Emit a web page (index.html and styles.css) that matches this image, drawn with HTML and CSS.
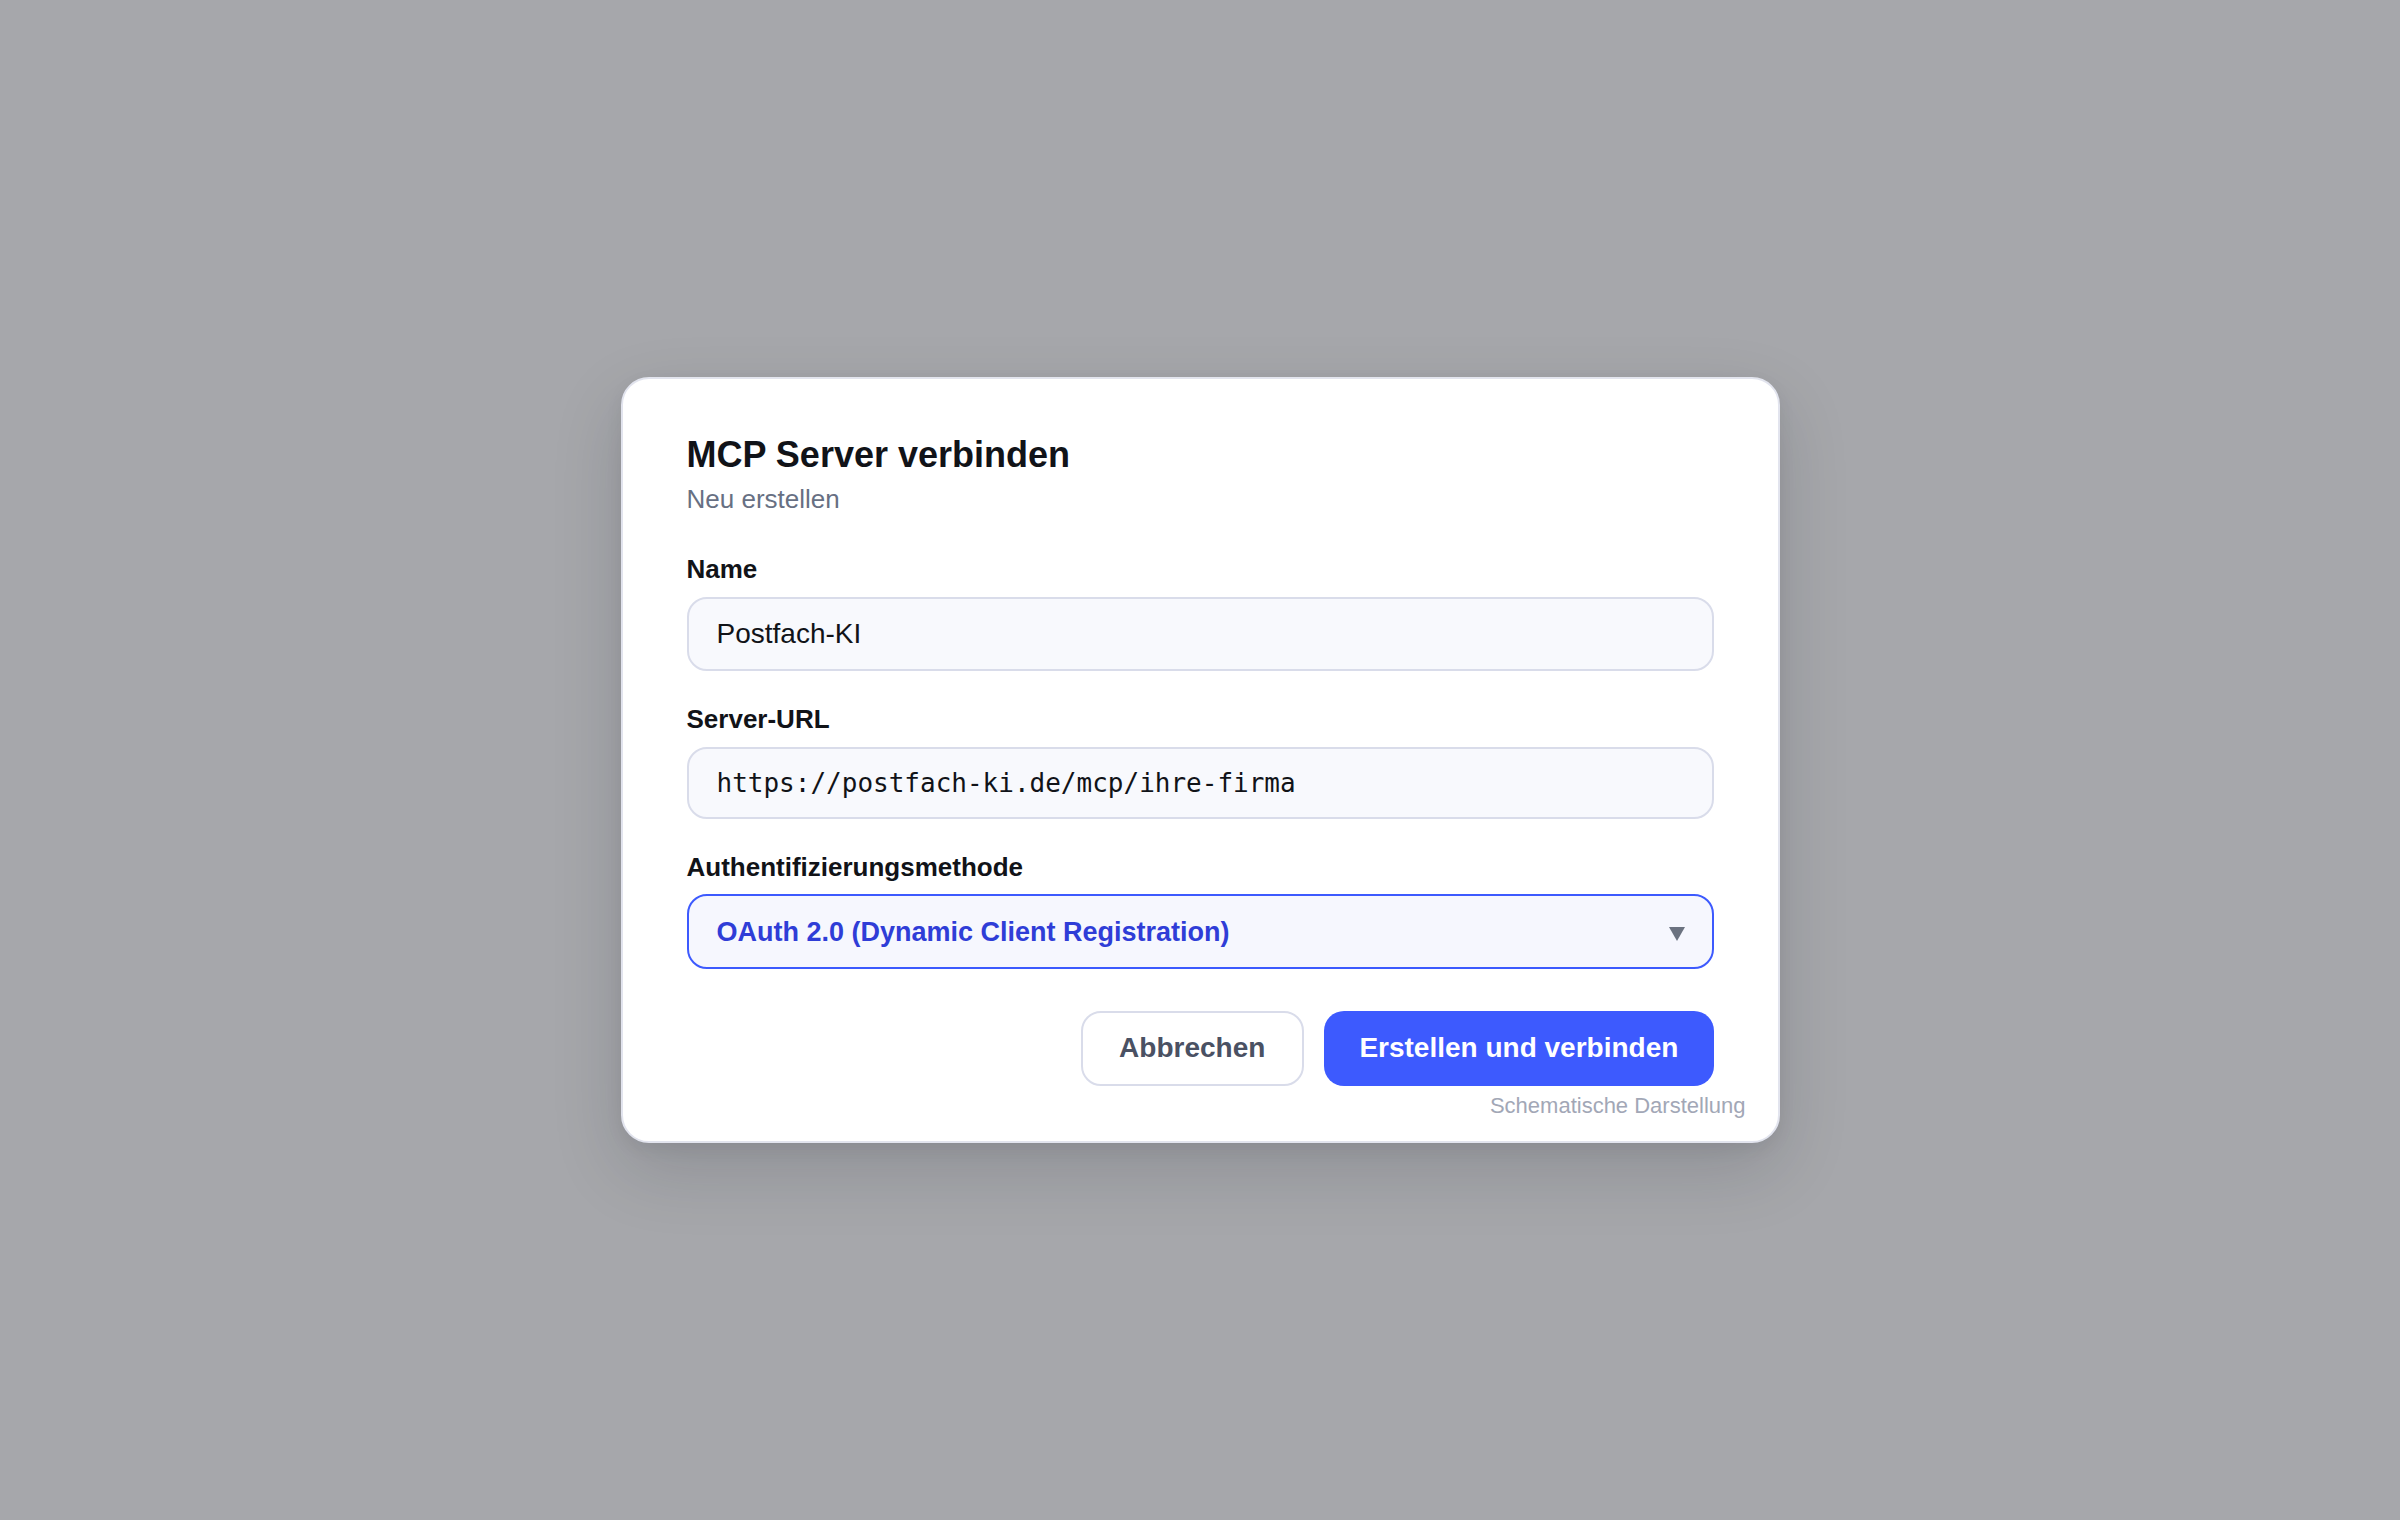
FILE: index.html
```html
<!DOCTYPE html>
<html lang="de">
<head>
<meta charset="utf-8">
<title>MCP Server verbinden</title>
<link rel="stylesheet" href="styles.css">
</head>
<body>
<div class="overlay">
  <div class="dialog">
    <div class="header">
      <h1 class="title">MCP Server verbinden</h1>
      <div class="subtitle">Neu erstellen</div>
    </div>
    <div class="fields">
      <div class="field">
        <div class="label">Name</div>
        <div class="box box-name">Postfach-KI</div>
      </div>
      <div class="field">
        <div class="label">Server-URL</div>
        <div class="box box-url">https://postfach-ki.de/mcp/ihre-firma</div>
      </div>
      <div class="field">
        <div class="label">Authentifizierungsmethode</div>
        <div class="box box-select">
          <span class="select-value">OAuth 2.0 (Dynamic Client Registration)</span>
          <svg class="caret" width="16" height="14" viewBox="0 0 16 14"><polygon points="0,0 16,0 8,14" fill="#6b7280"/></svg>
        </div>
      </div>
    </div>
    <div class="actions">
      <button class="btn btn-secondary">Abbrechen</button>
      <button class="btn btn-primary">Erstellen und verbinden</button>
    </div>
    <div class="caption">Schematische Darstellung</div>
  </div>
</div>
</body>
</html>
```
FILE: styles.css
```css
html, body {
  margin: 0;
  padding: 0;
}
body {
  background: #a6a7ab;
  font-family: "Liberation Sans", Arial, sans-serif;
  color: #111827;
}
.overlay {
  height: 1520px;
  display: flex;
  align-items: center;
  justify-content: center;
}
.dialog {
  position: relative;
  box-sizing: border-box;
  width: 1159px;
  background: #ffffff;
  border: 2px solid #e2e4ee;
  border-radius: 28px;
  padding: 54px 64px 55.5px 64px;
  box-shadow: 0 26px 70px rgba(20, 22, 35, 0.16), 0 6px 18px rgba(20, 22, 35, 0.06);
}
.header {
  display: flex;
  flex-direction: column;
  gap: 6px;
  margin-bottom: 39.3px;
}
.title {
  margin: 0;
  font-size: 36px;
  line-height: 44px;
  font-weight: 700;
  color: #111318;
}
.subtitle {
  font-size: 26px;
  line-height: 32px;
  color: #677083;
}
.fields {
  display: flex;
  flex-direction: column;
  gap: 33px;
}
.field {
  display: flex;
  flex-direction: column;
  gap: 12.6px;
}
.label {
  font-size: 26px;
  line-height: 30px;
  font-weight: 700;
  color: #111318;
}
.box {
  box-sizing: border-box;
  display: flex;
  align-items: center;
  padding: 0 28px;
  border: 2px solid #d9dcea;
  border-radius: 20px;
  background: #f8f9fd;
  color: #111318;
}
.box-name {
  height: 74.3px;
  font-size: 28px;
  padding-top: 1px;
}
.box-url {
  height: 72.3px;
  font-family: "DejaVu Sans Mono", "Liberation Mono", monospace;
  font-size: 26px;
}
.box-select {
  height: 74.7px;
  justify-content: space-between;
  border-color: #3d5afe;
  background: #f6f7fe;
  padding-top: 2px;
  padding-right: 27px;
}
.select-value {
  font-size: 27px;
  font-weight: 700;
  color: #2f3dd7;
}
.caret {
  display: block;
  margin-top: 2px;
}
.actions {
  margin-top: 41.7px;
  display: flex;
  justify-content: flex-end;
  gap: 20.7px;
}
.btn {
  box-sizing: border-box;
  height: 75px;
  border-radius: 20px;
  font-family: "Liberation Sans", Arial, sans-serif;
  font-size: 28px;
  font-weight: 700;
  cursor: pointer;
}
.btn-secondary {
  width: 222.6px;
  background: #ffffff;
  border: 2px solid #d9dcea;
  color: #4a5163;
}
.btn-primary {
  width: 389.3px;
  background: #3d5afe;
  border: none;
  color: #ffffff;
}
.caption {
  position: absolute;
  right: 32px;
  bottom: 23.5px;
  font-size: 22px;
  line-height: 25px;
  color: #a2a7b6;
}
```
